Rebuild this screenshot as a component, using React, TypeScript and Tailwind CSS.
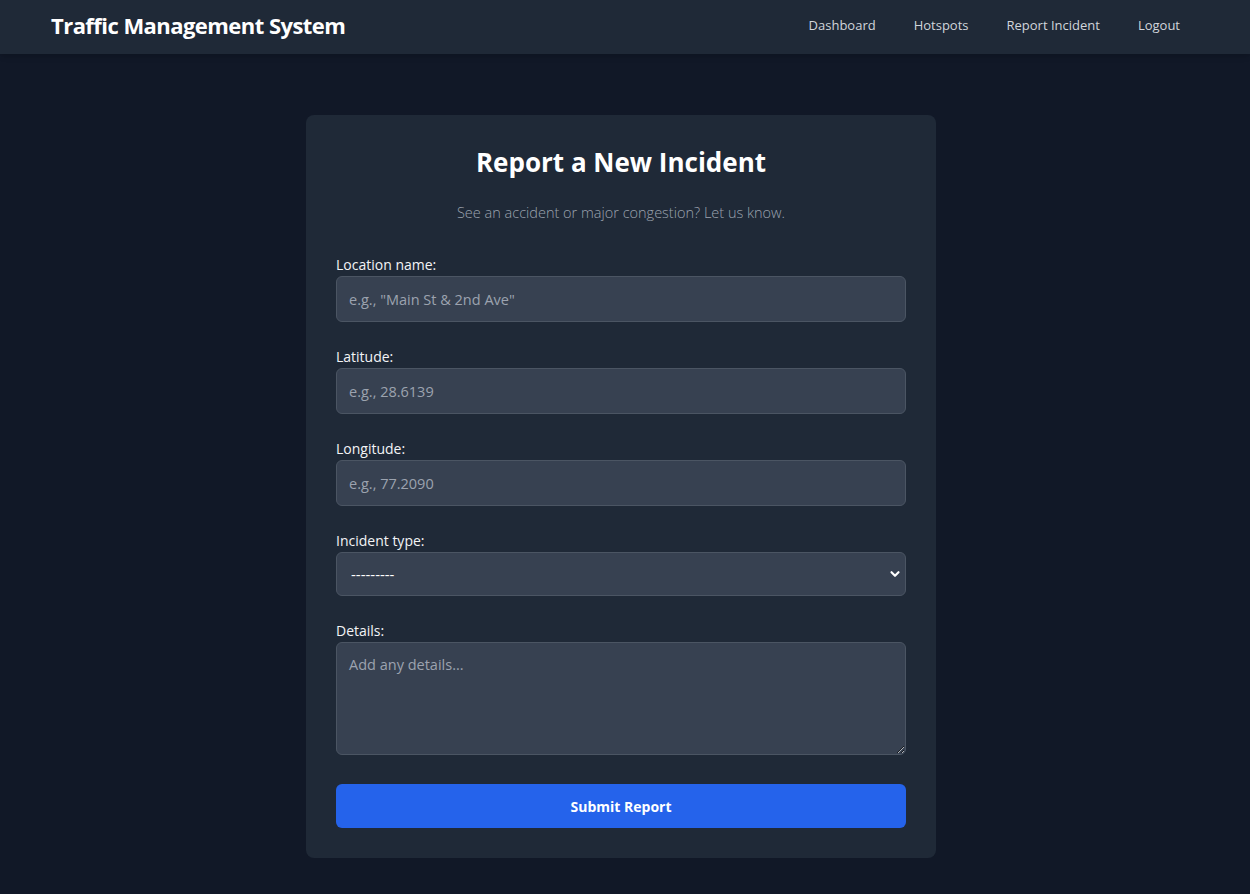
import React, { useState } from 'react';

const font = { fontFamily: '"Open Sans", "Noto Sans", sans-serif' };

export default function App() {
  const [location, setLocation] = useState('');
  const [lat, setLat] = useState('');
  const [lng, setLng] = useState('');
  const [kind, setKind] = useState('');
  const [details, setDetails] = useState('');

  const inputCls =
    'w-full h-[46px] px-3 rounded-md bg-[#374151] border border-[#4b5563] text-[14.5px] text-white placeholder:text-[#9ca3af] outline-none';
  const labelCls = 'block text-[14px] leading-[18px] mb-[2px] text-[#f3f4f6]';

  return (
    <div className="min-h-screen bg-[#111827] text-white" style={font}>
      <header className="h-[54px] bg-[#1f2937] flex items-center justify-between px-[51px] pb-[3px] shadow-md">
        <h1 className="text-[22px] font-bold tracking-tight">Traffic Management System</h1>
        <nav className="flex items-center gap-[38px] pr-[19px] text-[13px] text-[#d1d5db]">
          <a href="#">Dashboard</a>
          <a href="#">Hotspots</a>
          <a href="#">Report Incident</a>
          <a href="#">Logout</a>
        </nav>
      </header>

      <main className="pt-[61px] pb-10 pr-2">
        <div className="w-[630px] mx-auto bg-[#1f2937] rounded-lg p-[30px]">
          <h2 className="text-[26px] leading-[34px] font-bold text-center">Report a New Incident</h2>
          <p className="mt-[23px] text-[14.5px] leading-[22px] text-[#9ca3af] text-center font-light">
            See an accident or major congestion? Let us know.
          </p>

          <form className="mt-[32px]" onSubmit={(e) => e.preventDefault()}>
            <div className="mb-[26px]">
              <label className={labelCls}>Location name:</label>
              <input
                className={inputCls}
                placeholder={'e.g., "Main St & 2nd Ave"'}
                value={location}
                onChange={(e) => setLocation(e.target.value)}
              />
            </div>
            <div className="mb-[26px]">
              <label className={labelCls}>Latitude:</label>
              <input
                className={inputCls}
                placeholder="e.g., 28.6139"
                value={lat}
                onChange={(e) => setLat(e.target.value)}
              />
            </div>
            <div className="mb-[26px]">
              <label className={labelCls}>Longitude:</label>
              <input
                className={inputCls}
                placeholder="e.g., 77.2090"
                value={lng}
                onChange={(e) => setLng(e.target.value)}
              />
            </div>
            <div className="mb-[26px]">
              <label className={labelCls}>Incident type:</label>
              <div className="relative">
                <select
                  className="w-full h-[44px] pl-[14px] pr-8 rounded-md bg-[#374151] border border-[#4b5563] text-[15px] text-white appearance-none outline-none"
                  value={kind}
                  onChange={(e) => setKind(e.target.value)}
                >
                  <option value="">---------</option>
                  <option value="accident">Accident</option>
                  <option value="congestion">Congestion</option>
                  <option value="roadwork">Road work</option>
                </select>
                <svg
                  className="absolute right-[4px] top-1/2 -translate-y-1/2 pointer-events-none"
                  width="14"
                  height="14"
                  viewBox="0 0 16 16"
                  fill="none"
                  stroke="white"
                  strokeWidth="2.5"
                  strokeLinecap="round"
                  strokeLinejoin="round"
                >
                  <path d="M4 6l4 4 4-4" />
                </svg>
              </div>
            </div>
            <div className="mb-[29px]">
              <label className={labelCls}>Details:</label>
              <textarea
                className="block w-full h-[113px] px-3 pt-[11px] pb-2 rounded-md bg-[#374151] border border-[#4b5563] text-[14.5px] text-white placeholder:text-[#9ca3af] outline-none"
                placeholder="Add any details..."
                value={details}
                onChange={(e) => setDetails(e.target.value)}
              />
            </div>
            <button className="w-full h-[44px] rounded-md bg-[#2563eb] text-[14px] font-bold text-white">
              Submit Report
            </button>
          </form>
        </div>
      </main>
    </div>
  );
}
